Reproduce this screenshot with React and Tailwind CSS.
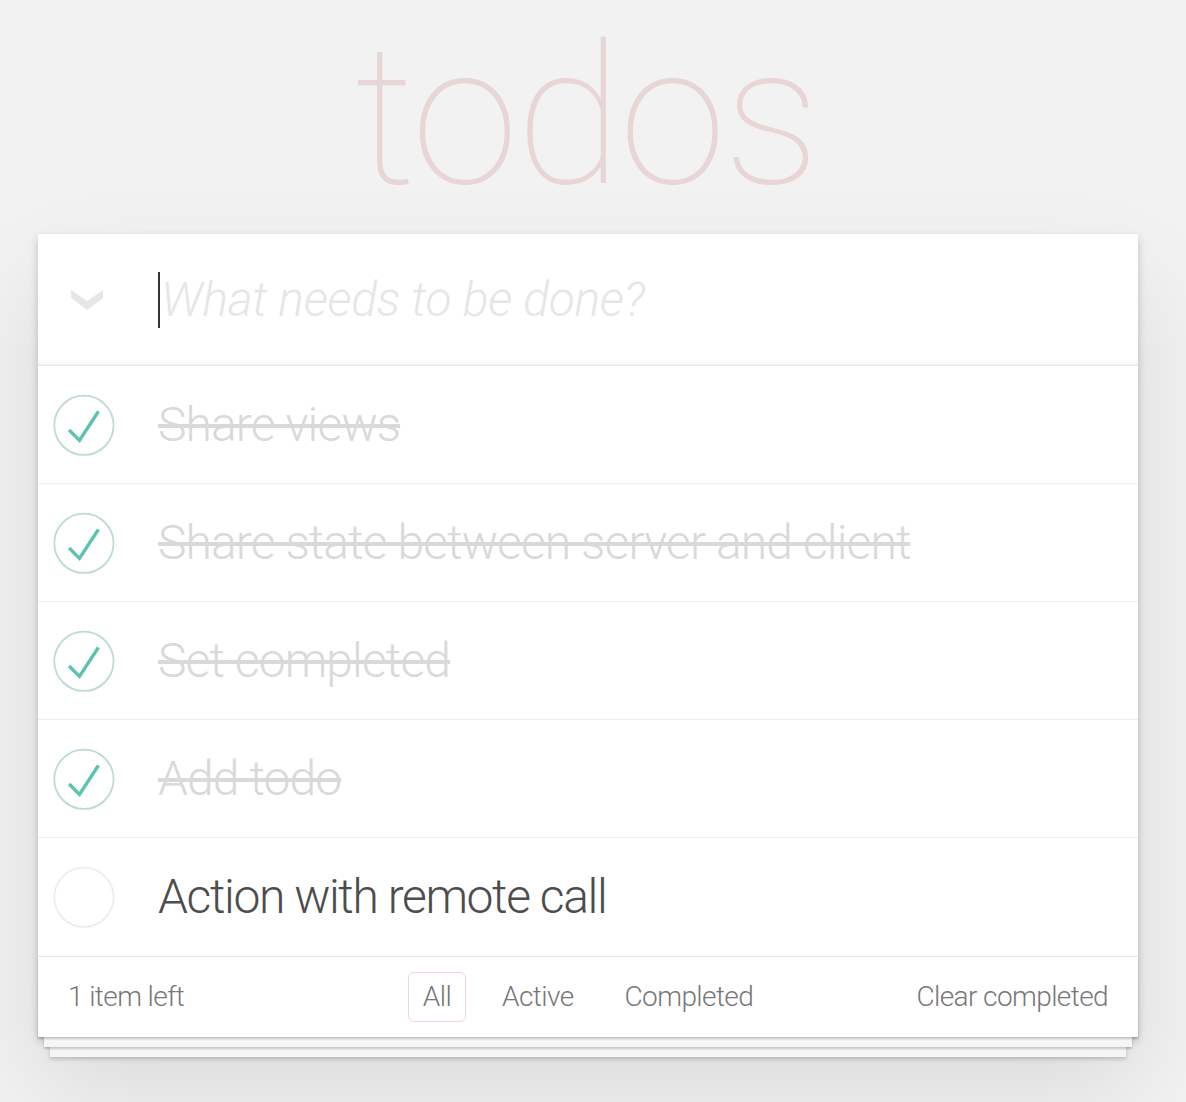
import React from "react";

const todos = [
  { id: 1, text: "Share views", done: true },
  { id: 2, text: "Share state between server and client", done: true },
  { id: 3, text: "Set completed", done: true },
  { id: 4, text: "Add todo", done: true },
  { id: 5, text: "Action with remote call", done: false },
];

const Check = ({ done }) => (
  <svg width="80" height="80" viewBox="-10 -18 100 135" className="shrink-0">
    <circle cx="50" cy="50" r="50" fill="none" stroke={done ? "#bddad5" : "#ededed"} strokeWidth="3" />
    {done && <path fill="#5dc2af" d="M72 25L42 71 27 56l-4 4 20 20 34-52z" />}
  </svg>
);

const App = () => {
  const left = todos.filter(t => !t.done).length;

  return (
    <div className="min-h-screen bg-[#f2f2f2] font-['Roboto','Liberation_Sans',sans-serif] font-light text-[#4d4d4d]">
      {/* Title */}
      <div className="h-[234px] pt-[2px] pr-[14px] text-center">
        <h1 className="text-[194px] leading-[230px] font-thin tracking-[-2.5px] text-[rgba(175,47,47,0.15)]">todos</h1>
      </div>

      {/* Card */}
      <div className="ml-[38px] w-[1100px] bg-white shadow-[0_4px_8px_0_rgba(0,0,0,0.2),0_50px_100px_0_rgba(0,0,0,0.1)]">
        <div className="flex items-center h-[131px] shadow-[inset_0_-4px_2px_rgba(0,0,0,0.03)]">
          <div className="w-[120px] flex justify-center">
            <svg width="32" height="21" viewBox="0 0 32 21" className="-ml-[22px]">
              <path d="M0 1 L16 12 L32 1 L32 9 L16 21 L0 9 Z" fill="#e6e6e6" />
            </svg>
          </div>
          <div className="flex items-center text-[48px] italic text-[#e6e6e6] tracking-[-0.3px]">
            <span className="w-[2px] h-[56px] bg-[#333]" />
            <span className="pl-[1px]">What needs to be done?</span>
          </div>
        </div>

        <ul className="border-t border-[#e6e6e6]">
          {todos.map((t, i) => (
            <li
              key={t.id}
              className={`flex items-center h-[118px] ${i < todos.length - 1 ? "border-b border-[#ededed]" : ""}`}
            >
              <Check done={t.done} />
              <span
                className={`pl-[40px] text-[48px] leading-[57.6px] ${t.done ? "text-[#d9d9d9] line-through tracking-[-0.9px]" : "text-[#4d4d4d] tracking-[-1.4px]"}`}
              >
                {t.text}
              </span>
            </li>
          ))}
        </ul>

        <footer className="grid grid-cols-[1fr_auto_1fr] items-center h-[81px] px-[30px] border-t border-[#e6e6e6] text-[28px] tracking-[-0.6px] text-[#777] shadow-[0_2px_2px_rgba(0,0,0,0.2),0_16px_0_-6px_#f6f6f6,0_18px_2px_-6px_rgba(0,0,0,0.2),0_32px_0_-12px_#f6f6f6,0_34px_4px_-12px_rgba(0,0,0,0.2)]">
          <span>{left} item left</span>
          <div className="flex items-center gap-[21px]">
            <span className="h-[50px] flex items-center px-[14px] rounded-[6px] border border-[rgba(175,47,47,0.2)]">All</span>
            <span className="h-[50px] flex items-center px-[14px] rounded-[6px] border border-transparent">Active</span>
            <span className="h-[50px] flex items-center px-[14px] rounded-[6px] border border-transparent">Completed</span>
          </div>
          <span className="text-right">Clear completed</span>
        </footer>
      </div>
    </div>
  );
};

export default App;
